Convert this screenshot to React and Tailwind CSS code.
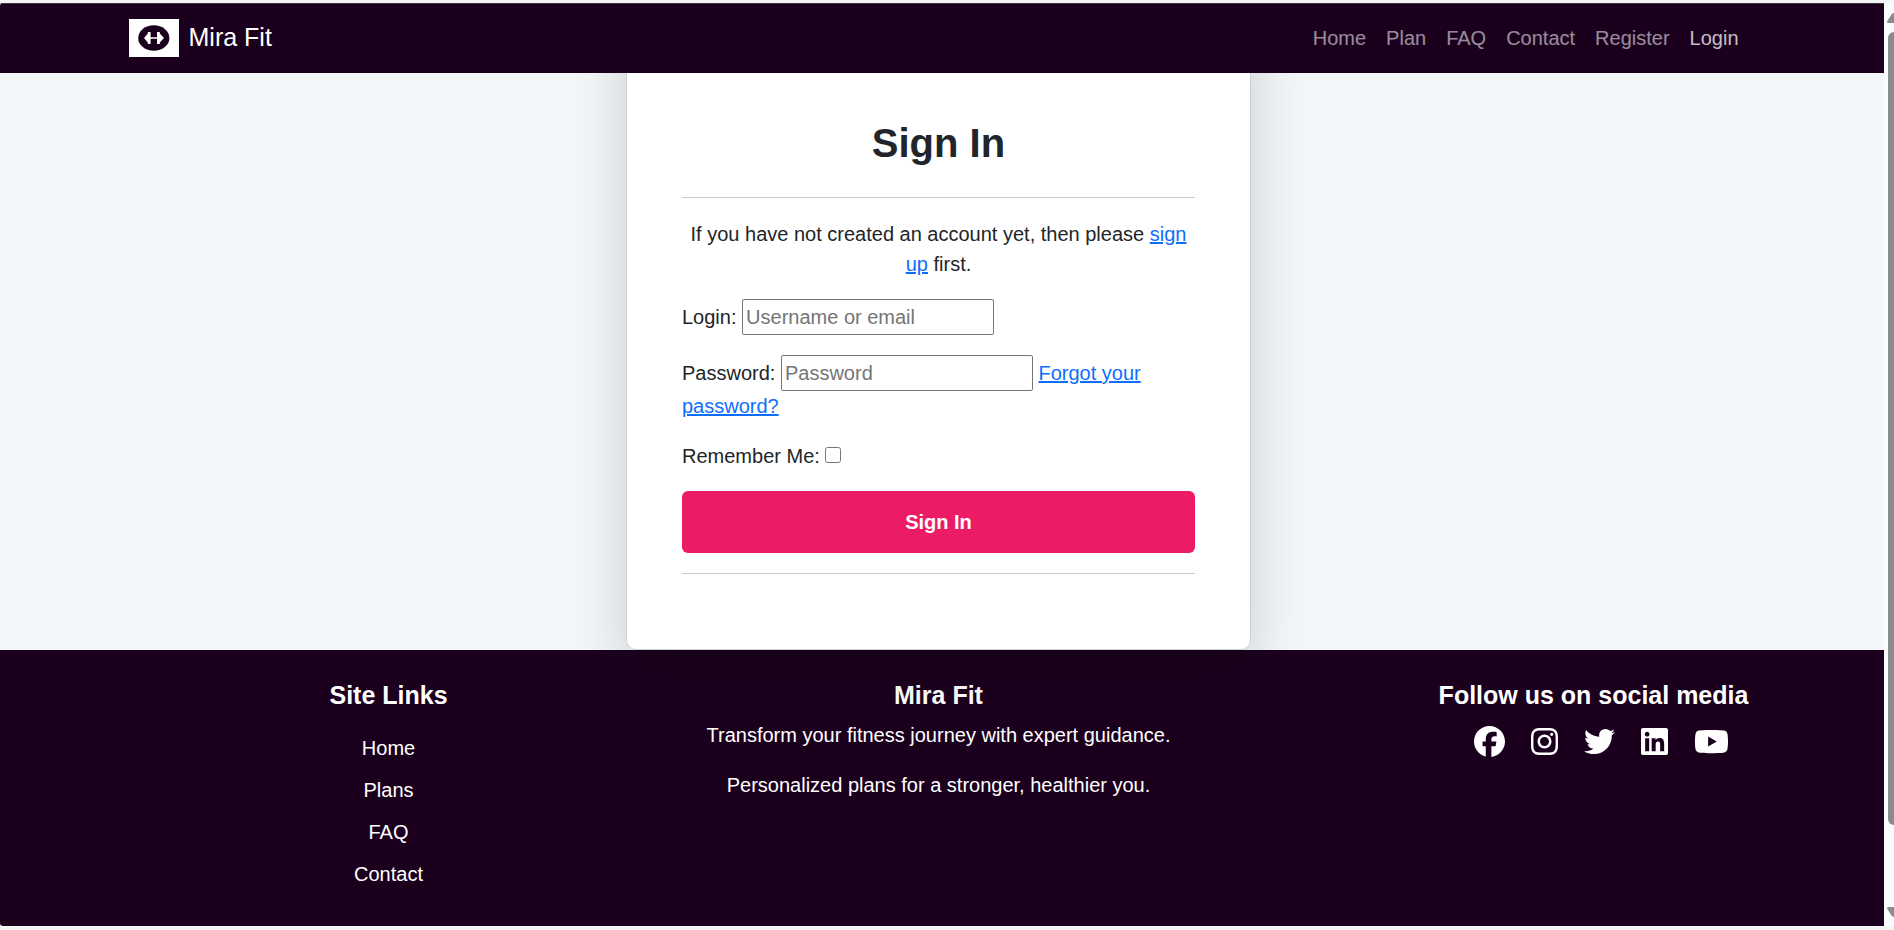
import { FaFacebook, FaInstagram, FaLinkedin, FaTwitter, FaYoutube } from "react-icons/fa6";

const navLinks = ["Home", "Plan", "FAQ", "Contact", "Register", "Login"];
const siteLinks = ["Home", "Plans", "FAQ", "Contact"];
const socials = [
  { name: "Facebook", Icon: FaFacebook, width: "w-[31px]" },
  { name: "Instagram", Icon: FaInstagram, width: "w-[27px]" },
  { name: "Twitter", Icon: FaTwitter, width: "w-[31px]" },
  { name: "LinkedIn", Icon: FaLinkedin, width: "w-[27px]" },
  { name: "YouTube", Icon: FaYoutube, width: "w-[35px]" },
];

function Logo() {
  return (
    <svg viewBox="0 0 50 38" className="h-[38px] w-[50px]" aria-hidden="true">
      <rect width="50" height="38" fill="#fff" />
      <ellipse cx="24.800" cy="19" rx="15.600" ry="12.800" fill="#1b001e" />
      <rect x="20" y="18" width="10" height="2" fill="#c9c0ca" />
      <path
        d="M18.8 13h2.800v12h-2.800v-1.600l-3.800-4.400 3.800-4.400zM30.800 13h-2.800v12h2.800v-1.600l4.200-4.400-4.200-4.400z"
        fill="#fff"
      />
    </svg>
  );
}

function Header() {
  return (
    <header className="relative z-20 border-t border-[#45304a] bg-[#1b001e] pr-[7px]">
      <nav className="mx-auto flex h-[69px] max-w-[1620px] items-center justify-between pb-px" aria-label="Main">
        <a href="#" className="flex items-center gap-[10px] text-[25px] leading-[36px] text-white">
          <Logo />
          <span className="pb-[2px]">Mira Fit</span>
        </a>
        <ul className="flex gap-5 pr-[10px]">
          {navLinks.map((name) => (
            <li key={name}>
              <a href="#" className={name === "Login" ? "text-white/75" : "text-white/55"}>
                {name}
              </a>
            </li>
          ))}
        </ul>
      </nav>
    </header>
  );
}

function SignInCard() {
  const field = "h-[36px] w-[252px] rounded-[2px] border border-[#767676] bg-white px-[3px] placeholder:text-[#757575]";
  const link = "text-[#0d6efd] underline";
  return (
    <section className="relative z-10 mx-auto -mt-16 w-full max-w-[625px] rounded-[10px] border border-[#cfd2d4] bg-white px-[55px] pt-[109px] pb-[75px] text-[#212529] shadow-[0_20px_60px_rgba(0,0,0,0.175)]">
      <h1 className="text-center text-[40px] leading-[48px] font-bold">Sign In</h1>
      <hr className="mt-[30px] mb-[21px] border-[#c8c9ca]" />
      <p className="mb-5 text-center">
        If you have not created an account yet, then please{" "}
        <a href="#" className={link}>
          sign up
        </a>{" "}
        first.
      </p>
      <form>
        <p className="mb-5">
          <label htmlFor="login">Login:</label>{" "}
          <input id="login" type="text" placeholder="Username or email" className={field} />
        </p>
        <p className="mb-5">
          <label htmlFor="password">Password:</label>{" "}
          <input id="password" type="password" placeholder="Password" className={field} />{" "}
          <a href="#" className={link}>
            Forgot your password?
          </a>
        </p>
        <p className="mb-5">
          <label htmlFor="remember">Remember Me:</label>{" "}
          <input id="remember" type="checkbox" className="size-4" />
        </p>
        <button type="submit" className="block h-[62px] w-full rounded-[6px] bg-[#eb1b66] font-bold text-white">
          Sign In
        </button>
      </form>
      <hr className="mt-5 border-[#c8c9ca]" />
    </section>
  );
}

function Footer() {
  return (
    <footer className="flex-1 bg-[#1b001e] py-[30px] pr-[7px] text-center text-white">
      <div className="mx-auto grid max-w-[1650px] grid-cols-3">
        <div>
          <h2 className="text-[25px] leading-[30px] font-bold">Site Links</h2>
          <ul className="mt-[23px] flex flex-col gap-3">
            {siteLinks.map((name) => (
              <li key={name}>
                <a href="#">{name}</a>
              </li>
            ))}
          </ul>
        </div>
        <div>
          <h2 className="mb-[10px] text-[25px] leading-[30px] font-bold">Mira Fit</h2>
          <p className="mb-5">Transform your fitness journey with expert guidance.</p>
          <p>Personalized plans for a stronger, healthier you.</p>
        </div>
        <div className="ml-auto w-[340px]">
          <h2 className="mb-4 text-[25px] leading-[30px] font-bold">Follow us on social media</h2>
          <div className="flex justify-center gap-[26px] pl-4">
            {socials.map(({ name, Icon, width }) => (
              <a key={name} href="#" aria-label={name}>
                <Icon className={`h-[31px] ${width}`} />
              </a>
            ))}
          </div>
        </div>
      </div>
    </footer>
  );
}

function ScrollTrack() {
  return (
    <div className="flex w-[10px] flex-col items-end overflow-hidden bg-[#fcfcfc] pt-[10px] pb-[9px]" aria-hidden="true">
      <svg viewBox="0 0 7 10" className="h-[10px] w-[7px]">
        <path d="M0 8.500L5 .8Q6 0 7 0V10H1.200Q0 10 0 8.500z" fill="#8b8b8b" />
      </svg>
      <div className="mt-[9px] w-[6px] grow-[793] rounded-l-[6px] bg-[#8b8b8b]" />
      <div className="grow-[82]" />
      <svg viewBox="0 0 7 10" className="h-[10px] w-[7px]">
        <path d="M0 1.500L5 9.200Q6 10 7 10V0H1.200Q0 0 0 1.500z" fill="#8b8b8b" />
      </svg>
    </div>
  );
}

export default function App() {
  return (
    <div className="flex min-h-screen bg-[#f5f5f5] pt-[3px] pb-1 font-['Liberation_Sans',Arial,sans-serif] text-[20px] leading-[30px]">
      <div className="flex flex-1 flex-col overflow-hidden rounded-l-[3px] bg-[#f3f7fa]">
        <Header />
        <main className="pr-[7px]">
          <SignInCard />
        </main>
        <Footer />
      </div>
      <ScrollTrack />
    </div>
  );
}
